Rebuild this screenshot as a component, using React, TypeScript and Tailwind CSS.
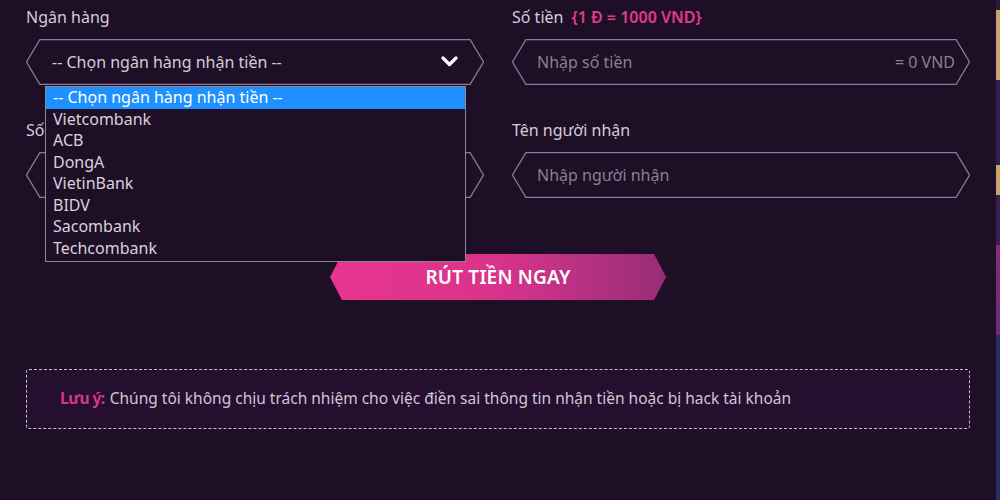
import { ReactNode } from 'react';

const font = { fontFamily: '"Noto Sans", "Liberation Sans", sans-serif' };

function HexFrame({ w, h, children }: { w: number; h: number; children?: ReactNode }) {
  const d = 14;
  const pts = `${d},0.5 ${w - d},0.5 ${w - 0.5},${h / 2} ${w - d},${h - 0.5} ${d},${h - 0.5} 0.5,${h / 2}`;
  return (
    <div className="relative" style={{ width: w, height: h }}>
      <svg className="absolute inset-0" width={w} height={h}>
        <polygon points={pts} fill="none" stroke="#8b7a96" strokeWidth="1.3" />
      </svg>
      <div className="relative flex h-full items-center">{children}</div>
    </div>
  );
}

const banks = ['Vietcombank', 'ACB', 'DongA', 'VietinBank', 'BIDV', 'Sacombank', 'Techcombank'];

export default function App() {
  return (
    <div className="relative flex h-[500px] w-[1000px] overflow-hidden bg-[#1e0f26]" style={font}>
      <div className="flex-1 pl-[26px] pr-[26px] pt-[7px]">
        <div className="grid w-[944px] grid-cols-[458px_458px] gap-x-[28px]">
          {/* bank select, shown open */}
          <div className="relative z-10">
            <p className="h-5 text-[16px] leading-5 text-[#d4ccd9]">Ngân hàng</p>
            <div className="mt-3">
              <HexFrame w={458} h={46}>
                <span className="pl-[26px] text-[16px] text-[#d4ccd9]">-- Chọn ngân hàng nhận tiền --</span>
                <svg className="absolute right-[26px] top-[17px]" width="17" height="11" viewBox="0 0 17 11">
                  <path d="M2 2 L8.5 8.5 L15 2" fill="none" stroke="#ffffff" strokeWidth="3.2" strokeLinecap="round" strokeLinejoin="round" />
                </svg>
              </HexFrame>
            </div>
            <div className="absolute left-[19px] top-[79px] w-[421px] border border-[#8d8794] bg-[#1e0f26] pb-[2px] text-[16px] leading-[21.5px] text-[#d8d2dc]">
              <div className="bg-[#1e90ff] pl-[7px] text-white">-- Chọn ngân hàng nhận tiền --</div>
              {banks.map((b) => (
                <div key={b} className="pl-[7px]">
                  {b}
                </div>
              ))}
            </div>
          </div>

          {/* amount */}
          <div>
            <p className="flex h-5 items-center gap-[8px] text-[16px] leading-5 text-[#d4ccd9]">
              Số tiền
              <span className="text-[16px] font-semibold text-[#e23a8f]">{'{1 Đ = 1000 VND}'}</span>
            </p>
            <div className="mt-3">
              <HexFrame w={458} h={46}>
                <span className="flex-1 pl-[25px] text-[16px] text-[#8a7f92]">Nhập số tiền</span>
                <span className="pr-[15px] text-[16px] text-[#8a7f92]">= 0 VND</span>
              </HexFrame>
            </div>
          </div>

          {/* account number */}
          <div className="mt-[35px]">
            <p className="h-5 whitespace-nowrap text-[16px] leading-5 text-[#d4ccd9]">Số tài khoản</p>
            <div className="mt-3">
              <HexFrame w={458} h={46} />
            </div>
          </div>

          {/* receiver */}
          <div className="mt-[35px]">
            <p className="h-5 text-[16px] leading-5 text-[#d4ccd9]">Tên người nhận</p>
            <div className="mt-3">
              <HexFrame w={458} h={46}>
                <span className="pl-[25px] text-[16px] text-[#8a7f92]">Nhập người nhận</span>
              </HexFrame>
            </div>
          </div>
        </div>

        <div className="mt-[56px] flex justify-center">
          <button
            type="button"
            className="flex h-[46px] w-[336px] items-center justify-center bg-gradient-to-r from-[#e8348f] via-[#d9338c] to-[#982c78] text-[19px] font-semibold tracking-[0.2px] text-white"
            style={{ clipPath: 'polygon(12px 0, calc(100% - 12px) 0, 100% 50%, calc(100% - 12px) 100%, 12px 100%, 0 50%)' }}
          >
            RÚT TIỀN NGAY
          </button>
        </div>

        <div className="mt-[69px] flex h-[60px] w-[944px] items-center rounded-[3px] border border-dashed border-[#c9bdd0] bg-[#240f2e] pl-[33px] text-[15.5px]">
          <span className="mr-[5px] font-bold tracking-[-0.5px] text-[#d9358c]">Lưu ý:</span>
          <span className="text-[#cfc6d6]">Chúng tôi không chịu trách nhiệm cho việc điền sai thông tin nhận tiền hoặc bị hack tài khoản</span>
        </div>
      </div>

      <div className="flex w-[4px] flex-col">
        <div className="h-[10px] bg-[#2a1a3a]" />
        <div className="h-[70px] bg-[#c9a06e]" />
        <div className="h-[85px] bg-[#2b2450]" />
        <div className="h-[30px] bg-[#c9a06e]" />
        <div className="h-[50px] bg-[#3a2050]" />
        <div className="h-[90px] bg-gradient-to-b from-[#8a2a70] to-[#6a2a80]" />
        <div className="flex-1 bg-[#2c2a6a]" />
      </div>
    </div>
  );
}
